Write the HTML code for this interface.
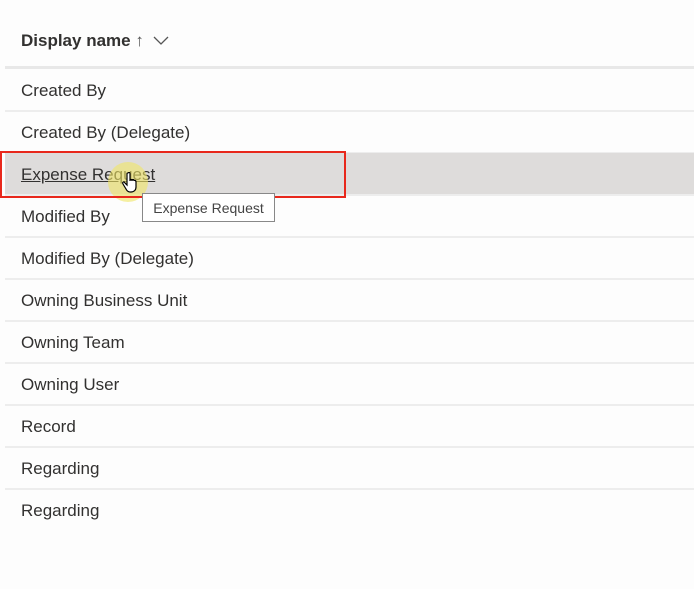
<!DOCTYPE html>
<html><head><style>
body{margin:0;width:694px;height:589px;background:#fdfdfd;font-family:"Liberation Sans",sans-serif;color:#323130;position:relative;overflow:hidden}
.hdr{position:absolute;left:21px;top:31px;font-size:17px;font-weight:bold;color:#323130}
.hl{position:absolute;left:5px;right:0;top:66px;height:3px;background:#e8e8e8}
.row{position:absolute;left:5px;right:0;height:41px;border-bottom:2px solid #ededed;font-size:17px;line-height:43px;padding-left:16px;box-sizing:content-box}
.sel{background:#dedcdb}
.red{position:absolute;left:0;top:151px;width:342px;height:43px;border:2px solid #e8281c}
.tip{position:absolute;left:142px;top:193px;width:131px;height:27px;border:1px solid #888;background:#fff;font-size:14px;line-height:29px;text-align:center;color:#444}
.dot{position:absolute;left:108px;top:162px;width:40px;height:40px;border-radius:50%;background:rgba(240,230,100,0.6)}
</style></head><body>
<div class="hdr">Display name <span style="font-weight:normal;color:#555">↑</span> <svg width="16" height="10" viewBox="0 0 16 10" style="margin-left:4px"><path d="M1 1 L8 8 L15 1" fill="none" stroke="#555" stroke-width="1.3"/></svg></div>
<div class="hl"></div>
<div class="row" style="top:69px">Created By</div>
<div class="row" style="top:111px">Created By (Delegate)</div>
<div class="row sel" style="top:153px"><span style="text-decoration:underline">Expense Request</span></div>
<div class="row" style="top:195px">Modified By</div>
<div class="row" style="top:237px">Modified By (Delegate)</div>
<div class="row" style="top:279px">Owning Business Unit</div>
<div class="row" style="top:321px">Owning Team</div>
<div class="row" style="top:363px">Owning User</div>
<div class="row" style="top:405px">Record</div>
<div class="row" style="top:447px">Regarding</div>
<div class="row" style="top:489px;border-bottom:none">Regarding</div>
<div class="dot"></div>
<div class="red"></div>
<div class="tip">Expense Request</div>
<svg style="position:absolute;left:122px;top:172px" width="20" height="22" viewBox="0 0 20 22"><path d="M6 1 C7 0 8 0 8 2 L8 9 C8 7 10 7 10 9 C10 7 12 7 12 9 C12 8 14 8 14 10 L14 15 C14 18 12 20 9 20 L8 20 C6 20 5 19 4 17 L1 12 C0 10 2 9 3 11 L5 13 L5 2 C5 1 5 1 6 1Z" fill="#fff" stroke="#000" stroke-width="1.2"/></svg>
</body></html>
